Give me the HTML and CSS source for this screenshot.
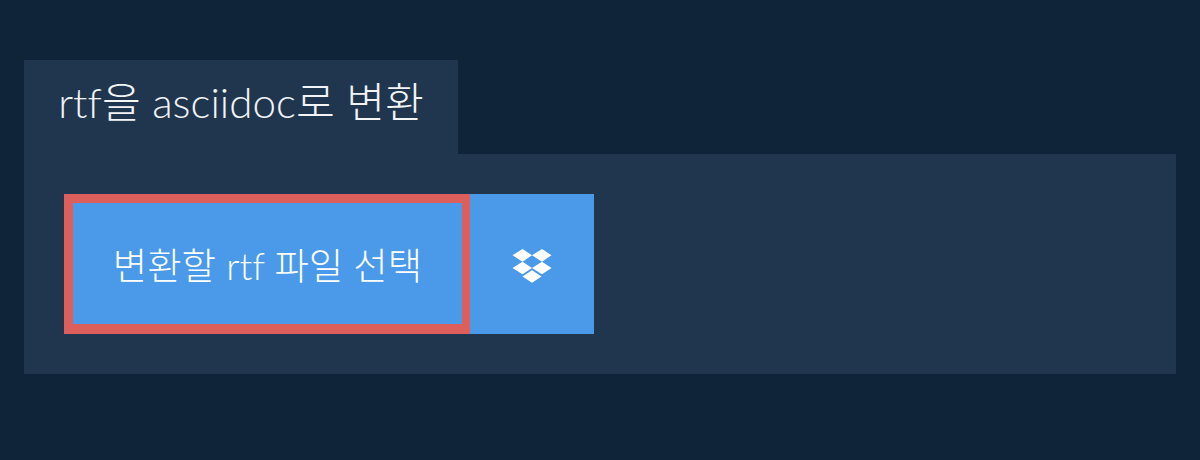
FILE: index.html
```html
<!DOCTYPE html>
<html lang="ko">
<head>
<meta charset="utf-8">
<title>rtf을 asciidoc로 변환</title>
<link rel="stylesheet" href="styles.css">
</head>
<body>
<main class="converter">
  <h1 class="tab">rtf을 asciidoc로 변환</h1>
  <section class="panel">
    <div class="actions">
      <button class="pick" type="button">변환할 rtf 파일 선택</button>
      <button class="dropbox" type="button" aria-label="Dropbox">
        <svg class="dropbox-icon" viewBox="0 0 40 34" width="40" height="34" aria-hidden="true">
          <path d="M10.5 0 20 6.3 10.5 12.7 .5 6.3ZM30 0 39.500 6.300 30 12.700 20 6.300ZM.5 19 10.500 12.700 20 19 10.500 25.300ZM30 12.700 39.500 19 30 25.300 20 19ZM20 21.300 29.500 27.500 20 33.700 10.500 27.500Z"/>
        </svg>
      </button>
    </div>
  </section>
</main>
</body>
</html>
```
FILE: styles.css
```css
* { box-sizing: border-box; }
html, body { margin: 0; height: 100%; }
body {
  background: #0f2439;
  font-family: "Lato", "Noto Sans CJK KR", sans-serif;
  font-weight: 300;
  font-variant-ligatures: none;
  color: #fff;
}
.converter { padding: 60px 24px 0; }
.tab {
  display: inline-block;
  vertical-align: top;
  width: 434px;
  height: 94px;
  margin: 0;
  padding-top: 15px;
  text-align: center;
  background: #20364f;
  color: #f2f4f6;
  font-size: 42.2px;
  line-height: 54px;
  font-weight: 300;
}
.panel {
  height: 220px;
  padding: 40px;
  background: #20364f;
}
.actions { display: flex; height: 140px; }
.pick, .dropbox {
  border: 0;
  padding: 0;
  margin: 0;
  background: #4a9ae9;
  color: #fff;
  font: inherit;
}
.pick {
  width: 406px;
  border-style: solid;
  border-color: #dd5f5c;
  border-width: 9.6px 8px 10px 9.6px;
  font-size: 37.4px;
}
.dropbox {
  width: 124px;
  display: flex;
  align-items: center;
  justify-content: center;
  padding-top: 4px;
}
.dropbox-icon { fill: #fff; display: block; }
```
